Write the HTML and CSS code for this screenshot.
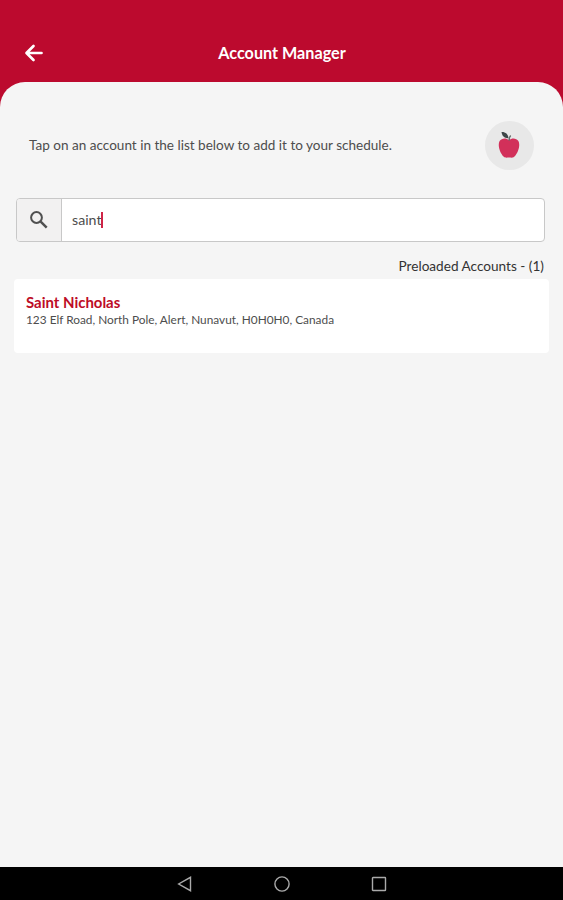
FILE: index.html
```html
<!DOCTYPE html>
<html lang="en">
<head>
    <meta charset="UTF-8">
    <meta name="viewport" content="width=device-width, initial-scale=1.0">
    <title>Account Manager</title>
    <link rel="stylesheet" href="styles.css">
</head>
<body>
    <header class="header">
        <button type="button" class="back" aria-label="Back">
            <svg width="20" height="20" viewBox="0 0 20 20" fill="none" stroke="#fff" stroke-width="2.7" stroke-linecap="round" stroke-linejoin="round">
                <path d="M17.5 10H3M9.500 3L2.500 10l7 7"/>
            </svg>
        </button>
        <h1>Account Manager</h1>
    </header>
    <main class="content">
        <div class="intro">
            <p>Tap on an account in the list below to add it to your schedule.</p>
            <div class="avatar">
                <svg width="24" height="30" viewBox="0 0 24 30">
                    <path d="M12 9c3-2.400 7.500-2 9.400 1 2.200 4-.2 12-3.900 15.600-2 1.800-3.500.9-5.500.9s-3.500.9-5.500-.9C2.800 22 .4 14 2.600 10 4.500 7 9 6.600 12 9z" fill="#d2305a"/>
                    <path d="M4.500 1c4-.2 6.500 2 7 6.200C7.500 7.500 5 5 4.500 1z" fill="#3d4647"/>
                    <path d="M12.200 9.500c-.2-2.500.2-3.800 1.500-5" fill="none" stroke="#666c6b" stroke-width="1.500"/>
                </svg>
            </div>
        </div>
        <div class="search">
            <div class="search-icon">
                <svg width="20" height="20" viewBox="0 0 20 20" fill="none" stroke="#505050">
                    <circle cx="7.500" cy="7.500" r="5.400" stroke-width="2"/>
                    <path d="M11.700 11.700l6 6" stroke-width="2.500"/>
                </svg>
            </div>
            <div class="search-field"><span class="query">saint</span><span class="caret"></span></div>
        </div>
        <p class="count">Preloaded Accounts - (1)</p>
        <div class="account">
            <h2>Saint Nicholas</h2>
            <p>123 Elf Road, North Pole, Alert, Nunavut, H0H0H0, Canada</p>
        </div>
    </main>
    <nav class="navbar">
        <svg width="16" height="16" viewBox="0 0 16 16"><path d="M13.500 1.300v13.400L1.700 8z"/></svg>
        <svg width="16" height="16" viewBox="0 0 16 16"><circle cx="8" cy="8" r="7.100"/></svg>
        <svg width="16" height="16" viewBox="0 0 16 16"><rect x="1.500" y="1.500" width="13" height="13" rx="0.500"/></svg>
    </nav>
</body>
</html>
```
FILE: styles.css
```css
* {
    box-sizing: border-box;
}
body {
    margin: 0;
    height: 100vh;
    display: flex;
    flex-direction: column;
    overflow: hidden;
    background: #bc0a2e;
    font-family: Lato, sans-serif;
    color: #4d4d4d;
}
h1, h2, p {
    margin: 0;
}

/* Header */
.header {
    display: grid;
    grid-template-columns: 44px 1fr 44px;
    align-items: center;
    height: 82px;
    padding: 24px 0 0;
    color: #fff;
}
.back {
    display: flex;
    justify-content: flex-end;
    padding: 0;
    border: 0;
    background: none;
}
.header h1 {
    padding-left: 1px;
    font-size: 16.2px;
    line-height: 20px;
    text-align: center;
    white-space: nowrap;
}

/* Content sheet */
.content {
    flex: 1;
    padding: 38px 14px 0;
    background: #f5f5f5;
    border-radius: 25px 25px 0 0;
}
.intro {
    display: flex;
    justify-content: space-between;
    align-items: center;
    height: 50px;
    padding: 0 15px;
}
.intro p {
    font-size: 13.56px;
    white-space: nowrap;
}
.avatar {
    display: flex;
    justify-content: center;
    align-items: center;
    width: 49px;
    height: 49px;
    padding: 1px 2px 0 0;
    border-radius: 50%;
    background: #e8e8e8;
}
.search {
    display: flex;
    height: 44px;
    margin: 28px 4px 0 2px;
    border: 1px solid #c8c8c8;
    border-radius: 4px;
    background: #fff;
}
.search-icon {
    display: flex;
    justify-content: center;
    align-items: center;
    width: 45px;
    border-right: 1px solid #c8c8c8;
    border-radius: 3px 0 0 3px;
    background: #f2f1f1;
}
.search-field {
    display: flex;
    align-items: center;
    padding: 0 0 1px 10px;
    font-size: 14.2px;
}
.caret {
    width: 2px;
    height: 16px;
    margin-left: -1px;
    background: #cf2446;
}
.count {
    margin: 15px 5px 0 0;
    font-size: 13.6px;
    line-height: 18px;
    text-align: right;
    color: #333;
}
.account {
    height: 74px;
    margin-top: 4px;
    padding: 14px 12px;
    border-radius: 4px;
    background: #fff;
}
.account h2 {
    font-size: 14.95px;
    line-height: 18px;
    color: #bd0c26;
}
.account p {
    font-size: 11.85px;
    line-height: 18px;
}

/* System navigation */
.navbar {
    display: flex;
    justify-content: center;
    align-items: center;
    gap: 81px;
    height: 33px;
    background: #000;
}
.navbar svg {
    fill: none;
    stroke: #aaa;
    stroke-width: 1.4;
}
```
